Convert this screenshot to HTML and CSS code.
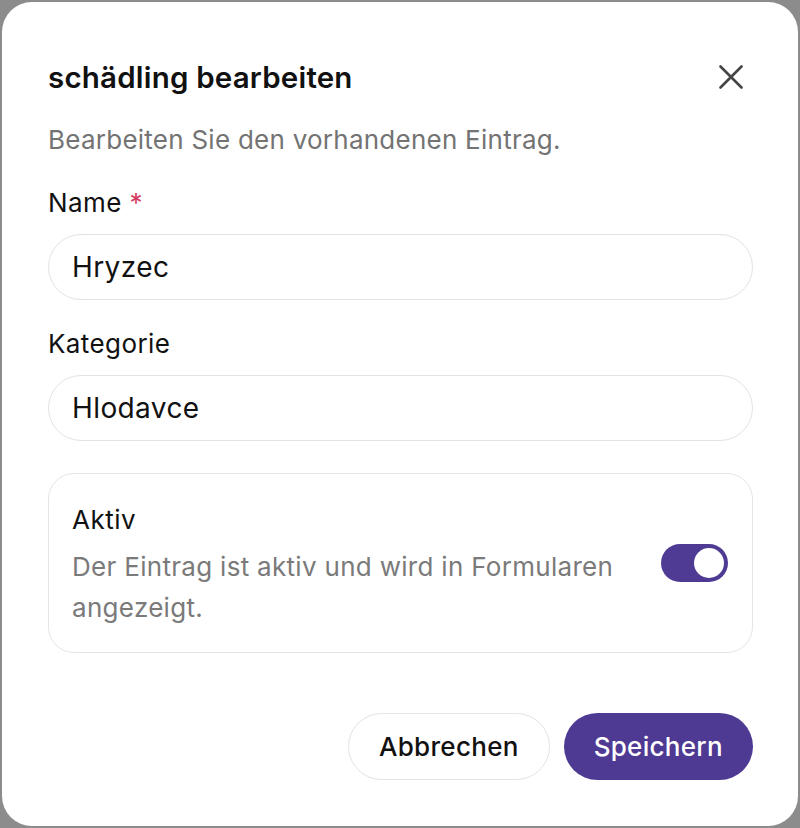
FILE: index.html
```html
<!DOCTYPE html>
<html lang="de">
<head>
<meta charset="utf-8">
<title>schädling bearbeiten</title>
<link rel="stylesheet" href="styles.css">
</head>
<body>
<div class="modal">
  <div class="header">
    <h2 class="title">schädling bearbeiten</h2>
    <button class="close" aria-label="Schließen">
      <svg width="24" height="24" viewBox="0 0 24 24"><path d="M1.5 1.5L22.5 22.5M22.5 1.5L1.5 22.5" stroke="#454545" stroke-width="2.6" stroke-linecap="round" fill="none"/></svg>
    </button>
  </div>
  <p class="subtitle">Bearbeiten Sie den vorhandenen Eintrag.</p>

  <label class="label">Name <span class="req">*</span></label>
  <div class="input">Hryzec</div>

  <label class="label">Kategorie</label>
  <div class="input">Hlodavce</div>

  <div class="card">
    <div class="card-text">
      <div class="card-title">Aktiv</div>
      <div class="card-desc">Der Eintrag ist aktiv und wird in Formularen angezeigt.</div>
    </div>
    <div class="toggle"><div class="knob"></div></div>
  </div>

  <div class="actions">
    <button class="btn btn-outline">Abbrechen</button>
    <button class="btn btn-primary">Speichern</button>
  </div>
</div>
</body>
</html>
```

FILE: styles.css
```css
* { box-sizing: border-box; }
html, body { margin: 0; padding: 0; }
body {
  background: #8c8c8c;
  padding: 2px;
  font-family: Inter, "Noto Sans", sans-serif;
  color: #111;
}
.modal {
  width: 796px;
  height: 824px;
  background: #fff;
  border-radius: 30px;
  padding: 53px 45px 46px 46px;
  display: flex;
  flex-direction: column;
}
.header {
  display: flex;
  justify-content: space-between;
  align-items: center;
  height: 44px;
}
.title {
  margin: 0;
  font-size: 29.5px;
  line-height: 36px;
  font-weight: 600;
  letter-spacing: 0.2px;
  color: #111;
}
.close {
  width: 44px;
  height: 44px;
  border: 0;
  background: transparent;
  padding: 0;
  display: flex;
  align-items: center;
  justify-content: center;
}
.subtitle {
  margin: 25px 0 0;
  font-size: 26px;
  line-height: 32px;
  letter-spacing: 0.25px;
  color: #737373;
}
.label {
  display: block;
  margin-top: 31px;
  font-size: 26px;
  line-height: 32px;
  font-weight: 400;
  letter-spacing: 0.4px;
  color: #111;
}
.label + .input { margin-top: 15px; }
.input + .label { margin-top: 28px; }
.req { color: #d23a5e; }
.input {
  height: 66px;
  border: 1.5px solid #e3e3e3;
  border-radius: 33px;
  padding: 0 23px;
  display: flex;
  align-items: center;
  font-size: 28px;
  letter-spacing: 0.4px;
  color: #111;
}
.card {
  margin-top: 32px;
  border: 1.5px solid #e5e5e5;
  border-radius: 26px;
  padding: 24px 24px 24px 23px;
  display: flex;
  align-items: center;
  justify-content: space-between;
  gap: 40px;
}
.card-text { flex: 1; }
.card-title {
  font-size: 26px;
  line-height: 44px;
  font-weight: 400;
  letter-spacing: 0.5px;
  color: #111;
}
.card-desc {
  margin-top: 4px;
  font-size: 26px;
  line-height: 41px;
  letter-spacing: 0.3px;
  color: #7a7a7a;
}
.toggle {
  width: 67px;
  height: 38px;
  border-radius: 19px;
  background: #4f3b94;
  padding: 4px;
  display: flex;
  justify-content: flex-end;
  flex-shrink: 0;
}
.knob {
  width: 30px;
  height: 30px;
  border-radius: 50%;
  background: #fff;
}
.actions {
  margin-top: auto;
  display: flex;
  justify-content: flex-end;
  gap: 14px;
}
.btn {
  height: 67px;
  border-radius: 34px;
  font-family: Inter, "Noto Sans", sans-serif;
  font-size: 26px;
  font-weight: 500;
  letter-spacing: 0.3px;
  padding: 0 30px;
}
.btn-outline {
  background: #fff;
  border: 1.5px solid #e3e3e3;
  color: #111;
}
.btn-primary {
  background: #4e3a93;
  border: 0;
  color: #fff;
}
```
